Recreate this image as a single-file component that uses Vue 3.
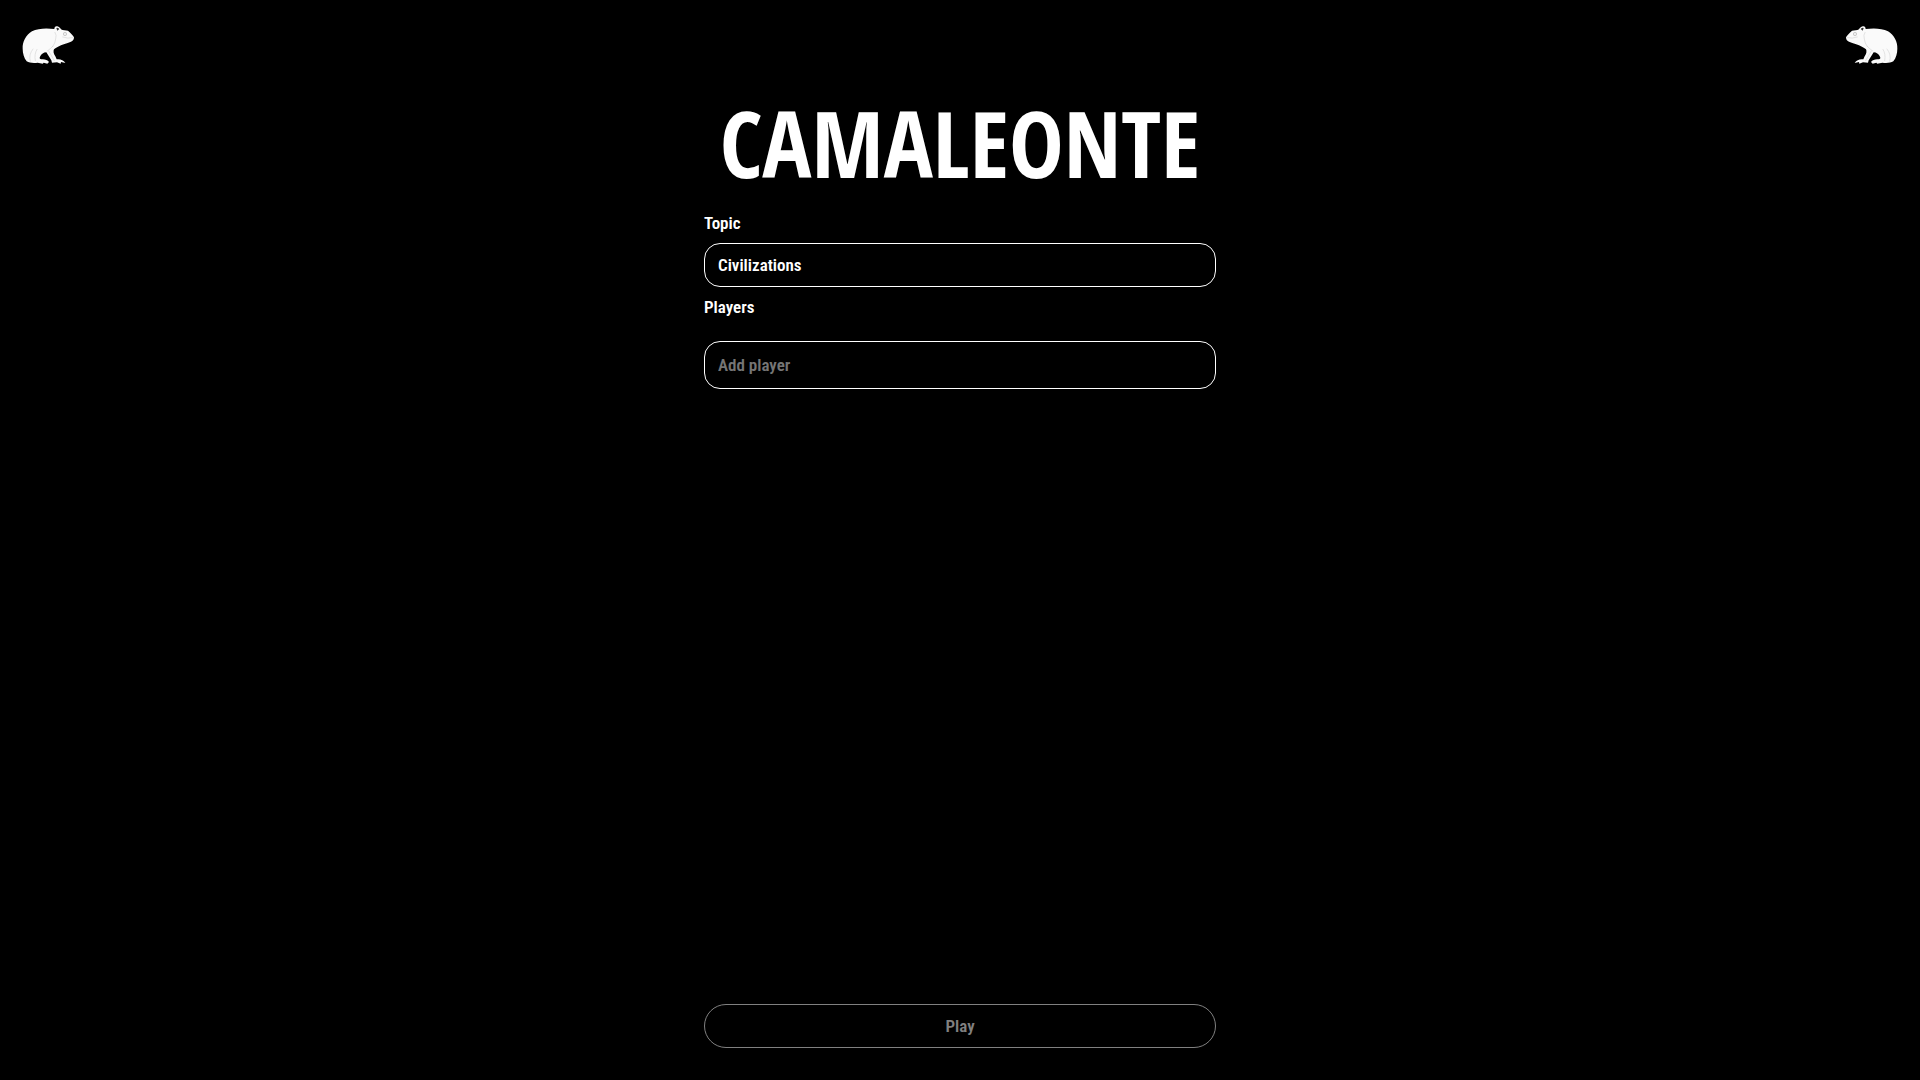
<script setup>
import { ref } from 'vue'

const topics = ['Civilizations']
const topic = ref(topics[0])
const player = ref('')
const sides = ['left', 'right']
</script>

<template>
  <div class="page">
    <header class="bar">
      <svg v-for="side in sides" :key="side" class="frog" :class="side" viewBox="36 30 159 120" aria-hidden="true">
        <path fill="#fafafa" d="M38 101 C37 80 48 60 66 49 C84 39 112 39 133 42 C133 36 137 32 142 34 C147 36 151 38 153 43 C158 47 168 46 174 47 C180 52 189 61 192 67 C192 75 188 79 181 81 C170 85 161 88 153 91 C145 96 137 98 132 103 C129 109 131 117 136 124 L140 133 C149 131 160 134 166 144 L153 141 L152 146 L141 142 L126 143 L124 136 L109 112 C101 112 94 117 90 125 C88 130 89 132 94 133 C103 132 113 134 117 141 L112 146 L101 143 L98 146 L83 143 C72 145 58 144 50 139 C42 129 38 115 38 101 Z" />
        <path fill="none" stroke="#d6d6d6" stroke-width="2" stroke-linecap="round" d="M135 52 Q141 60 137 72 Q136 84 128 95 M158 66 Q174 72 188 68 M112 108 Q122 101 128 94 M61 139 Q55 119 69 102 M76 137 Q72 117 81 103 M116 108 L133 137" />
        <path fill="#333" d="M139 39 Q143 37 148 42 L142 47 Z" />
        <circle cx="165" cy="57" r="5" fill="#eee" stroke="#bbb" stroke-width="2" />
      </svg>
    </header>
    <main class="game">
      <h1>CAMALEONTE</h1>
      <form class="setup" @submit.prevent>
        <label for="topic">Topic</label>
        <select id="topic" v-model="topic" class="field topic">
          <option v-for="t in topics" :key="t">{{ t }}</option>
        </select>
        <label for="player">Players</label>
        <input id="player" v-model="player" class="field player" type="text" placeholder="Add player" />
        <button class="play" type="submit" disabled>Play</button>
      </form>
    </main>
  </div>
</template>

<style>
body {
  background: #000;
}
</style>

<style scoped>
.page {
  box-sizing: border-box;
  display: flex;
  flex-direction: column;
  min-height: 100vh;
  padding-bottom: 32px;
  background: #000;
  color: #fff;
  font-family: "Roboto Condensed", Roboto, sans-serif;
  font-size: 17px;
  font-weight: 600;
}
.bar {
  display: flex;
  justify-content: space-between;
  padding: 25px 22px 0;
}
.frog {
  width: 53px;
  height: 40px;
}
.frog.right {
  transform: scaleX(-1);
}
.game {
  box-sizing: border-box;
  flex: 1;
  display: flex;
  flex-direction: column;
  align-items: center;
  width: 100%;
  max-width: 512px;
  margin: 0 auto;
  padding-top: 30px;
}
h1 {
  margin: 0 0 20px;
  font-family: "Open Sans Condensed", "Roboto Condensed", sans-serif;
  font-size: 92px;
  font-weight: 700;
  line-height: 96px;
}
.setup {
  flex: 1;
  display: flex;
  flex-direction: column;
  width: 100%;
}
label {
  line-height: 24px;
}
.field {
  box-sizing: border-box;
  width: 100%;
  margin: 0;
  padding: 0 13px;
  border: 1px solid #fff;
  border-radius: 16px;
  outline: 0;
  appearance: none;
  background: #000;
  color: #fff;
  font: inherit;
}
.topic {
  height: 44px;
  margin: 8px 0;
}
.player {
  height: 48px;
  margin-top: 22px;
}
.player::placeholder {
  color: #757575;
  opacity: 1;
}
.play {
  height: 44px;
  margin-top: auto;
  padding: 0;
  border: 1px solid #808080;
  border-radius: 22px;
  background: #000;
  color: #808080;
  font: inherit;
}
</style>
